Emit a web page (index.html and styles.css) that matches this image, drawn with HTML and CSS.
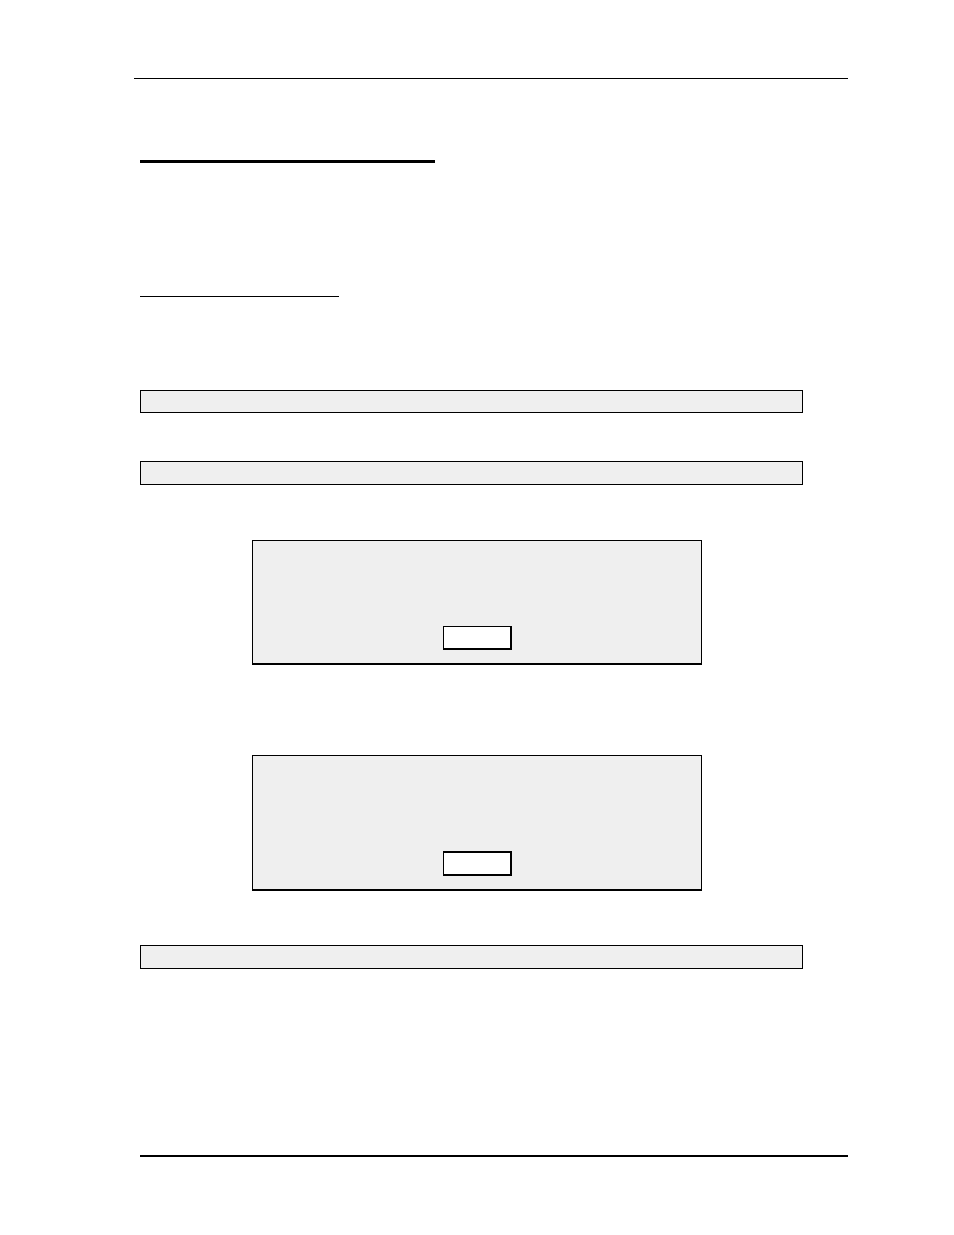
FILE: index.html
```
<!DOCTYPE html>
<html lang="en">
<head>
    <meta charset="UTF-8">
    <meta name="viewport" content="width=device-width, initial-scale=1.0">
    <title>Document</title>
    <link rel="stylesheet" href="styles.css">
</head>
<body>

<div class="page">
    <header class="page-header"></header>

    <main class="content">
        <div class="title-rule"></div>
        <div class="subtitle-rule"></div>

        <div class="bar bar-short"></div>
        <div class="bar bar-second"></div>

        <section class="dialog">
            <button type="button" class="dialog-btn" aria-label="OK"></button>
        </section>

        <section class="dialog dialog-tall">
            <button type="button" class="dialog-btn dialog-btn-thick" aria-label="OK"></button>
        </section>

        <div class="bar"></div>
    </main>

    <footer class="page-footer"></footer>
</div>

</body>
</html>
```
FILE: styles.css
```
* {
    box-sizing: border-box;
}
body {
    font-family: "Liberation Sans", Arial, sans-serif;
    margin: 0;
    background-color: #fff;
}
.page {
    display: flex;
    flex-direction: column;
    min-height: 100vh;
    padding: 78px 106px 78px 140px;
}
/* the top line starts a little to the left of the text column */
.page-header {
    margin-left: -6px;
    border-top: 1px solid #000;
}
.content {
    flex: 1;
    display: flex;
    flex-direction: column;
    padding: 81px 45px 0 0;
}
.title-rule {
    width: 100%;
    max-width: 295px;
    border-top: 3px solid #000;
}
.subtitle-rule {
    width: 100%;
    max-width: 199px;
    margin: 133px 0 93px;
    border-top: 1px solid #000;
}
.bar {
    min-height: 24px;
    background-color: #efefef;
    border: 1px solid #000;
}
.bar-short {
    min-height: 23px;
}
.bar-second {
    margin: 48px 0 55px;
}
.dialog {
    display: flex;
    flex-direction: column;
    align-items: center;
    justify-content: flex-end;
    min-height: 125px;
    margin: 0 101px 90px 112px;
    padding-bottom: 13px;
    background-color: #efefef;
    border: 1px solid #000;
    border-bottom-width: 2px;
}
.dialog-tall {
    min-height: 136px;
    margin-bottom: 54px;
}
.dialog-btn {
    width: 69px;
    height: 24px;
    padding: 0;
    background-color: #fff;
    border: solid #000;
    border-width: 1px 2px 2px 1px;
    border-radius: 0;
    cursor: pointer;
}
.dialog-btn-thick {
    height: 25px;
    border-top-width: 2px;
}
.page-footer {
    border-top: 2px solid #000;
}
```
